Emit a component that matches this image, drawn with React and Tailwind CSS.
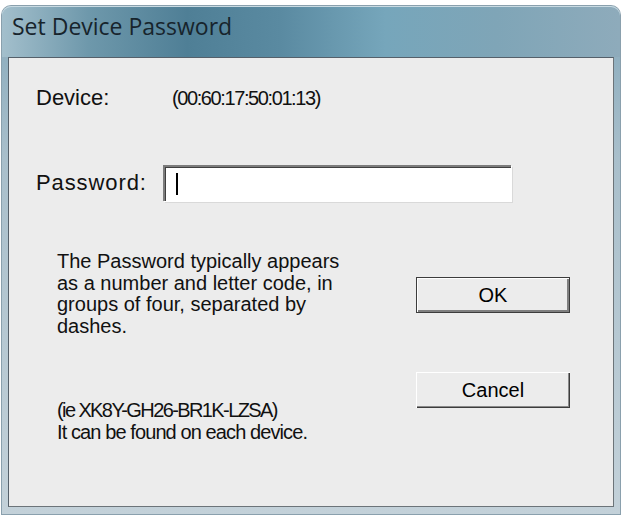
import React from 'react'

const SANS = "font-['Liberation_Sans',Arial,sans-serif]"

function Win7Button({ label, isDefault }) {
  // classic 3D push button; default button gets the dark outline
  return (
    <button
      type="button"
      className={
        'h-[36px] w-[154px] bg-[#ececec] text-[20px] leading-none text-black ' +
        (isDefault
          ? 'border border-[#3c3c3c] shadow-[inset_1px_1px_0_#ffffff,inset_-2px_-2px_0_#7f7f7f]'
          : 'shadow-[inset_1px_1px_0_#ffffff,inset_-1px_-1px_0_#3c3c3c,inset_-2px_-2px_0_#8a8a8a]')
      }
    >
      {label}
    </button>
  )
}

export default function App() {
  return (
    <div className={'h-[518px] w-[623px] overflow-hidden bg-white ' + SANS}>
      <div className="ml-[2px] mt-[6px] flex h-[508px] w-[618px] flex-col rounded-t-[9px] bg-[linear-gradient(180deg,#86a9bb_0%,#a9bfcb_30%,#c3d1d9_100%)] shadow-[0_0_0_1px_#8aa0ad]">
        {/* title bar */}
        <div className="h-[51px] shrink-0 rounded-t-[9px] bg-[linear-gradient(90deg,#a3bfcc_0%,#6e98ab_14%,#4f7f96_30%,#5a8aa1_45%,#76a6bb_62%,#7fa5b7_80%,#8eabbb_100%)] pl-[10px] pt-[5px] shadow-[inset_0_1px_0_#c9dbe3]">
          <span className="font-['Open_Sans','Noto_Sans',sans-serif] text-[23px] leading-[30px] text-[#17242c]">
            Set Device Password
          </span>
        </div>

        {/* client area */}
        <div className="mx-[6px] mb-[7px] flex flex-1 flex-col border border-[#6c7479] border-l-[#55606a] border-t-[#55606a] bg-[#ececec] pl-[27px] pt-[29px] text-[20px] leading-[22px] text-[#111]">
          <div className="flex items-center">
            <span className="w-[136px] text-[22px]">Device:</span>
            <span className="tracking-[-1.4px]">(00:60:17:50:01:13)</span>
          </div>

          <div className="mt-[56px] flex items-center">
            <span className="w-[127px] text-[22px] tracking-[0.9px]">Password:</span>
            <div className="flex h-[36px] w-[348px] items-center border-l-2 border-t-2 border-[#7c7c7c] bg-white pl-[11px] shadow-[inset_1px_1px_0_#3f3f3f,1px_1px_0_#ffffff,2px_2px_0_#d9d9d9]">
              <div className="h-[22px] w-[2px] bg-black" />
            </div>
          </div>

          <div className="mt-[50px] flex">
            <div className="w-[380px] pl-[21px]">
              <p className="leading-[21.5px]">
                The Password typically appears
                <br />
                as a number and letter code, in
                <br />
                groups of four, separated by
                <br />
                dashes.
              </p>
              <p className="mt-[62px] leading-[22px]">
                <span className="tracking-[-1.6px]">(ie XK8Y-GH26-BR1K-LZSA)</span>
                <br />
                <span className="tracking-[-0.9px]">It can be found on each device.</span>
              </p>
            </div>
            <div className="flex flex-col gap-[59px] pt-[26px]">
              <Win7Button label="OK" isDefault />
              <Win7Button label="Cancel" />
            </div>
          </div>
        </div>
      </div>
    </div>
  )
}
